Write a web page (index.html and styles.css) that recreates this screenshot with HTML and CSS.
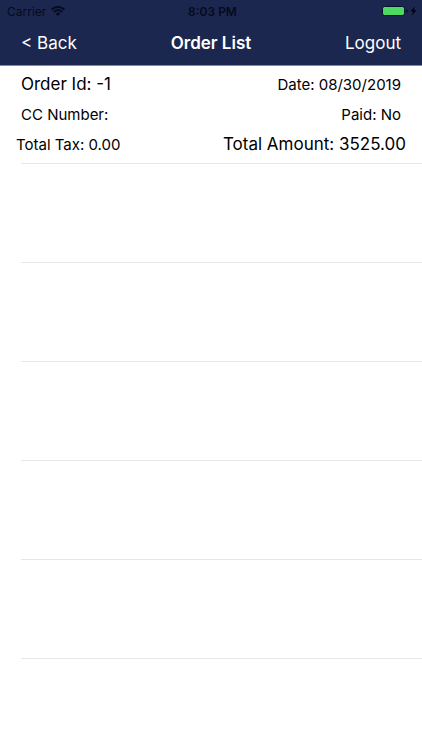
FILE: index.html
```html
<!DOCTYPE html>
<html lang="en">
<head>
<meta charset="utf-8">
<meta name="viewport" content="width=device-width, initial-scale=1">
<title>Order List</title>
<link rel="stylesheet" href="styles.css">
</head>
<body>
<header class="header">
  <div class="status">
    <div class="carrier">
      <span>Carrier</span>
      <svg class="wifi" viewBox="0 0 14 10" aria-hidden="true">
        <path d="M0.6 3.6a9.2 9.2 0 0 1 12.8 0M2.8 6a6 6 0 0 1 8.4 0" fill="none" stroke="currentColor" stroke-width="1.9"/>
        <path d="M7 10L4.7 7.8a3.2 3.2 0 0 1 4.6 0z" fill="currentColor"/>
      </svg>
    </div>
    <span class="time">8:03 PM</span>
    <div class="power">
      <svg class="battery" viewBox="0 0 36 12" aria-hidden="true">
        <rect x="0.5" y="1.5" width="22" height="9" rx="2" fill="#4cd964" stroke="#07102a"/>
        <path d="M24.4 4.4a1.6 1.6 0 0 1 0 3.2z" fill="#07102a"/>
        <path d="M32.9 1L28.6 6.6h2.4l-1 4.2 4.5-5.8h-2.6z" fill="#02040c"/>
      </svg>
    </div>
  </div>
  <nav class="navbar">
    <button class="nav-button" type="button">&lt; Back</button>
    <h1 class="title">Order List</h1>
    <button class="nav-button nav-end" type="button">Logout</button>
  </nav>
</header>
<main>
  <ul class="orders">
    <li class="order">
      <div class="line"><span class="large">Order Id: -1</span><span>Date: 08/30/2019</span></div>
      <div class="line"><span>CC Number:</span><span>Paid: No</span></div>
      <div class="line totals"><span>Total Tax: 0.00</span><span class="large">Total Amount: 3525.00</span></div>
    </li>
    <li class="order"></li>
    <li class="order"></li>
    <li class="order"></li>
    <li class="order"></li>
    <li class="order"></li>
  </ul>
</main>
</body>
</html>
```
FILE: styles.css
```css
* {
  box-sizing: border-box;
}

body {
  margin: 0;
  background: #fff;
  color: #000;
  font-family: Inter, "Liberation Sans", sans-serif;
  font-size: 15px;
}

.header {
  background: #1c2750;
  border-bottom: 1px solid #8489a4;
}

.status {
  display: grid;
  grid-template-columns: 1fr auto 1fr;
  align-items: center;
  height: 22px;
  padding: 0 4px 0 7px;
  color: #050a1c;
  font-size: 12px;
}

.carrier {
  display: flex;
  align-items: center;
  gap: 5px;
}

.wifi {
  width: 14px;
  height: 10px;
}

.time {
  font-weight: 600;
}

.power {
  display: flex;
  justify-content: flex-end;
}

.battery {
  width: 36px;
  height: 12px;
}

.navbar {
  display: grid;
  grid-template-columns: 1fr auto 1fr;
  align-items: center;
  height: 43px;
  padding: 0 21px 1px;
}

.nav-button {
  justify-self: start;
  padding: 0;
  border: 0;
  background: none;
  color: #fff;
  font: inherit;
  font-size: 17px;
}

.nav-end {
  justify-self: end;
}

.title {
  margin: 0;
  color: #fff;
  font-size: 17px;
  font-weight: 600;
}

.orders {
  margin: 0;
  padding: 0;
  list-style: none;
}

.order {
  position: relative;
  min-height: 99px;
  padding: 3px 0;
}

.order::after {
  content: "";
  position: absolute;
  right: 0;
  bottom: 1px;
  left: 21px;
  height: 1px;
  background: #e6e6e8;
}

.line {
  display: flex;
  align-items: center;
  justify-content: space-between;
  height: 30px;
  padding: 0 21px;
}

.totals {
  padding: 0 16px;
}

.large {
  font-size: 17px;
}
```
